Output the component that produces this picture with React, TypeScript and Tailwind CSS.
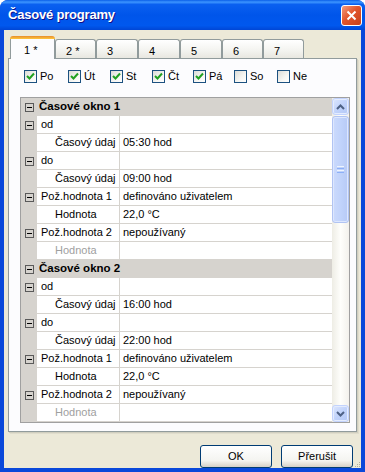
import React from "react";

const FONT = { fontFamily: '"Liberation Sans", Arial, sans-serif' };

type Row =
  | { kind: "cat"; text: string }
  | { kind: "parent"; label: string; value: string }
  | { kind: "child"; label: string; value: string; disabled?: boolean };

const rows: Row[] = [
  { kind: "cat", text: "Časové okno 1" },
  { kind: "parent", label: "od", value: "" },
  { kind: "child", label: "Časový údaj", value: "05:30 hod" },
  { kind: "parent", label: "do", value: "" },
  { kind: "child", label: "Časový údaj", value: "09:00 hod" },
  { kind: "parent", label: "Pož.hodnota 1", value: "definováno uživatelem" },
  { kind: "child", label: "Hodnota", value: "22,0 °C" },
  { kind: "parent", label: "Pož.hodnota 2", value: "nepoužívaný" },
  { kind: "child", label: "Hodnota", value: "", disabled: true },
  { kind: "cat", text: "Časové okno 2" },
  { kind: "parent", label: "od", value: "" },
  { kind: "child", label: "Časový údaj", value: "16:00 hod" },
  { kind: "parent", label: "do", value: "" },
  { kind: "child", label: "Časový údaj", value: "22:00 hod" },
  { kind: "parent", label: "Pož.hodnota 1", value: "definováno uživatelem" },
  { kind: "child", label: "Hodnota", value: "22,0 °C" },
  { kind: "parent", label: "Pož.hodnota 2", value: "nepoužívaný" },
  { kind: "child", label: "Hodnota", value: "", disabled: true },
];

const days = [
  { t: "Po", c: true, w: "w-[44px]" },
  { t: "Út", c: true, w: "w-[42px]" },
  { t: "St", c: true, w: "w-[42px]" },
  { t: "Čt", c: true, w: "w-[41px]" },
  { t: "Pá", c: true, w: "w-[41px]" },
  { t: "So", c: false, w: "w-[43px]" },
  { t: "Ne", c: false, w: "w-[42px]" },
];

const tabs = [
  { t: "1 *", w: "w-[45px]" },
  { t: "2 *", w: "w-[41px]" },
  { t: "3", w: "w-[42px]" },
  { t: "4", w: "w-[42px]" },
  { t: "5", w: "w-[42px]" },
  { t: "6", w: "w-[41px]" },
  { t: "7", w: "w-[41px]" },
];

function MinusBox() {
  return (
    <div className="w-[9px] h-[9px] border border-[#5A5A5A] flex items-center justify-center">
      <div className="w-[5px] h-[1px] bg-black" />
    </div>
  );
}

function Checkbox({ checked }: { checked: boolean }) {
  return (
    <div className="w-[13px] h-[13px] border border-[#1C5180] bg-[linear-gradient(135deg,#DCDCD7,#F6F6F3_60%,#FFFFFF)] flex items-center justify-center">
      {checked && (
        <svg width="9" height="9" viewBox="0 0 9 9">
          <path d="M1 4 L3.5 6.5 L8 1.5" stroke="#21A121" strokeWidth="2" fill="none" />
        </svg>
      )}
    </div>
  );
}

function ScrollButton({ up }: { up: boolean }) {
  return (
    <div className="w-[17px] h-[17px] rounded-[3px] border border-[#C3D3FD] bg-[linear-gradient(135deg,#DCE6FE,#C1D3FB_50%,#B4C8F6)] shadow-[inset_0_0_0_1px_#E4ECFE] flex items-center justify-center">
      <svg width="9" height="6" viewBox="0 0 9 6">
        <path
          d={up ? "M1 5 L4.5 1.5 L8 5" : "M1 1 L4.5 4.5 L8 1"}
          stroke="#4D6185"
          strokeWidth="2"
          fill="none"
        />
      </svg>
    </div>
  );
}

export default function App() {
  return (
    <div
      style={FONT}
      className="w-[365px] h-[472px] bg-[#0A48DA] rounded-t-[8px] overflow-hidden flex flex-col text-[11px] text-black"
    >
      {/* Title bar */}
      <div className="h-[30px] shrink-0 flex items-center justify-between pl-[8px] pr-[3px] bg-[linear-gradient(to_bottom,#0A5FE8_0%,#3D95FF_7%,#0A60F0_15%,#0055EA_50%,#0058EE_85%,#0046D5_100%)]">
        <span className="text-white font-bold text-[13px] tracking-[-0.2px] [text-shadow:1px_1px_#0F1089]">
          Časové programy
        </span>
        <div className="w-[21px] h-[21px] rounded-[3px] border border-white bg-[linear-gradient(135deg,#F49C7D,#E2552C_45%,#C7401A)] flex items-center justify-center">
          <svg width="11" height="11" viewBox="0 0 11 11">
            <path d="M1.5 1.5 L9.5 9.5 M9.5 1.5 L1.5 9.5" stroke="white" strokeWidth="2" />
          </svg>
        </div>
      </div>

      {/* Body */}
      <div className="flex-1 mx-[4px] mb-[4px] bg-[#ECE9D8] flex flex-col pt-[6px] px-[4px]">
        {/* Tabs */}
        <div className="flex items-end h-[23px] -mb-[1px] ml-[2px] relative z-10">
          {tabs.map((tab, i) =>
            i === 0 ? (
              <div
                key={i}
                className={`${tab.w} h-[23px] rounded-t-[3px] overflow-hidden flex flex-col`}
              >
                <div className="h-[3px] bg-[linear-gradient(to_bottom,#E68B2C,#FFC83C)]" />
                <div className="flex-1 bg-[#FCFCFE] border-x border-[#919B9C] pl-[13px] pt-[3px]">
                  {tab.t}
                </div>
              </div>
            ) : (
              <div
                key={i}
                className={`${tab.w} h-[19px] mb-[1px] rounded-t-[3px] border border-b-0 border-[#919B9C] bg-[linear-gradient(to_bottom,#FFFFFF,#F3F3EF_60%,#E8E7E0)] pl-[10px] pt-[3px]`}
              >
                {tab.t}
              </div>
            )
          )}
        </div>

        {/* Panel */}
        <div className="h-[374px] shrink-0 border border-[#919B9C] bg-[#FCFCFE] shadow-[1px_1px_0_#D0CEBF,2px_2px_0_#E0DDCD] flex flex-col pl-[11px] pr-[6px]">
          <div className="flex items-center mt-[11px] ml-[4px] h-[13px]">
            {days.map((d) => (
              <div key={d.t} className={`${d.w} flex items-center`}>
                <Checkbox checked={d.c} />
                <span className="ml-[3px]">{d.t}</span>
              </div>
            ))}
          </div>

          {/* Property grid */}
          <div className="mt-[14px] h-[326px] border border-[#A0A0A0] bg-white flex">
            <div className="w-[311px] flex flex-col">
              {rows.map((r, i) =>
                r.kind === "cat" ? (
                  <div key={i} className="h-[18px] bg-[#D6D3CE] flex items-center">
                    <div className="w-[16px] flex justify-center">
                      <MinusBox />
                    </div>
                    <span className="font-bold text-[11.5px] ml-[2px]">{r.text}</span>
                  </div>
                ) : (
                  <div key={i} className="h-[18px] flex">
                    <div className="w-[16px] bg-[#D6D3CE] flex items-center justify-center">
                      {r.kind === "parent" && <MinusBox />}
                    </div>
                    <div
                      className={`w-[83px] border-r border-b border-[#D6D3CE] flex items-center ${
                        r.kind === "parent" ? "pl-[4px]" : "pl-[18px]"
                      } ${r.kind === "child" && r.disabled ? "text-[#A0A0A0]" : ""}`}
                    >
                      {r.label}
                    </div>
                    <div className="flex-1 border-b border-[#D6D3CE] flex items-center pl-[3px]">
                      {r.value}
                    </div>
                  </div>
                )
              )}
            </div>
            {/* Scrollbar */}
            <div className="w-[17px] flex flex-col bg-[linear-gradient(to_right,#EEEDE5,#FEFEFB_50%,#F3F1EC)]">
              <ScrollButton up />
              <div className="mt-[1px] h-[107px] rounded-[3px] border border-[#B1C4F3] bg-[linear-gradient(to_right,#CBDAFC,#C1D3FB_50%,#B7CAF6)] shadow-[inset_0_0_0_1px_#DDE7FE] flex flex-col items-center justify-center gap-[1px]">
                <div className="w-[7px] h-[1px] bg-[#EEF4FE]" />
                <div className="w-[7px] h-[1px] bg-[#8CB0F8]" />
                <div className="w-[7px] h-[1px] bg-[#EEF4FE]" />
                <div className="w-[7px] h-[1px] bg-[#8CB0F8]" />
              </div>
              <div className="flex-1" />
              <ScrollButton up={false} />
            </div>
          </div>
        </div>

        {/* Buttons */}
        <div className="mt-[8px] flex items-end justify-end -mr-[4px]">
          <div className="w-[72px] h-[23px] rounded-[3px] border border-[#003C74] bg-[linear-gradient(to_bottom,#FFFFFF,#F4F4F0_70%,#D6D0C5)] flex items-center justify-center">
            OK
          </div>
          <div className="w-[72px] h-[23px] ml-[9px] rounded-[3px] border border-[#003C74] bg-[linear-gradient(to_bottom,#FFFFFF,#F4F4F0_70%,#D6D0C5)] flex items-center justify-center">
            Přerušit
          </div>
          <div className="w-[8px] h-[28px] flex items-end justify-end">
            <svg width="7" height="7" viewBox="0 0 7 7">
              <rect x="5" y="1" width="1" height="1" fill="#B0AE9C" />
              <rect x="3" y="3" width="1" height="1" fill="#B0AE9C" />
              <rect x="5" y="3" width="1" height="1" fill="#B0AE9C" />
              <rect x="1" y="5" width="1" height="1" fill="#B0AE9C" />
              <rect x="3" y="5" width="1" height="1" fill="#B0AE9C" />
              <rect x="5" y="5" width="1" height="1" fill="#B0AE9C" />
            </svg>
          </div>
        </div>
      </div>
    </div>
  );
}
